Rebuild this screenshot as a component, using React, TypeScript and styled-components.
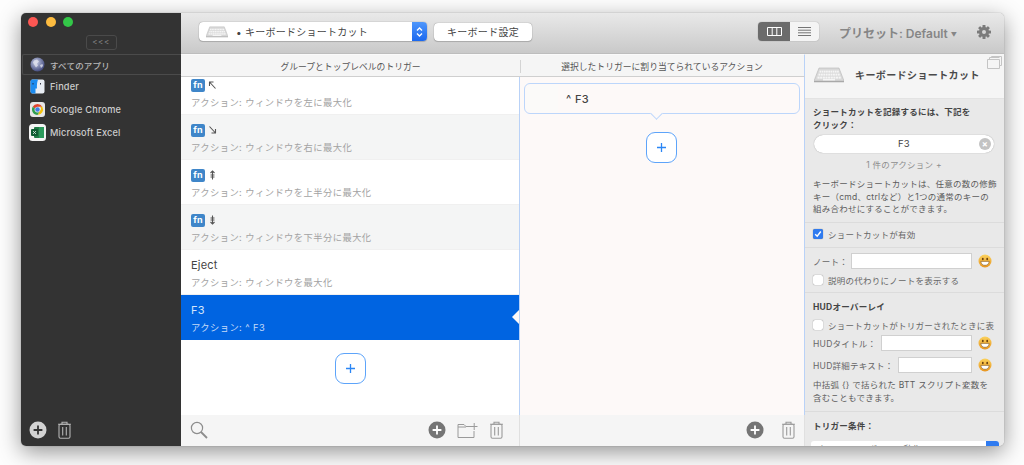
import React from 'react';
import styled, { createGlobalStyle } from 'styled-components';

const GlobalStyle = createGlobalStyle`
  html, body {
    margin: 0;
    height: 465px;
    overflow: hidden;
    background: #fdfdfd;
    font-family: 'Inter', 'Noto Sans CJK JP', sans-serif;
  }
  * { box-sizing: border-box; }
`;

const Page = styled.div`
  width: 1024px;
  height: 465px;
  padding: 13px 20px 19px 21px;
`;
const Window = styled.div`
  display: flex;
  width: 983px;
  height: 433px;
  border-radius: 5px;
  overflow: hidden;
  box-shadow: 0 6px 22px rgba(0, 0, 0, 0.42), 0 0 1px rgba(0, 0, 0, 0.5);
`;

/* sidebar */
const Sidebar = styled.aside`
  width: 160px;
  flex: none;
  display: flex;
  flex-direction: column;
  background: #333333;
`;
const Lights = styled.div`
  display: flex;
  gap: 7.5px;
  padding: 4px 0 0 7px;
  height: 22px;
`;
const Light = styled.span<{ $color: string }>`
  width: 10px;
  height: 10px;
  border-radius: 50%;
  background: ${(p) => p.$color};
`;
const CollapseRow = styled.div`
  display: flex;
  justify-content: center;
  height: 19px;
`;
const CollapseButton = styled.div`
  width: 31px;
  height: 15px;
  border: 1px solid #4a4a4a;
  border-radius: 3px;
  color: #8a8a8a;
  font-size: 8px;
  line-height: 13px;
  text-align: center;
  letter-spacing: 0.5px;
`;
const AppList = styled.div`
  flex: 1;
  display: flex;
  flex-direction: column;
`;
const AppRow = styled.div<{ $active?: boolean }>`
  height: ${(p) => (p.$active ? '21px' : '23px')};
  margin-left: 1px;
  display: flex;
  align-items: center;
  gap: 4px;
  padding-left: 6px;
  font-size: ${(p) => (p.$active ? '8.5px' : '9.2px')};
  font-weight: 500;
  letter-spacing: 0.2px;
  color: ${(p) => (p.$active ? '#b8b8b8' : '#cdcdcd')};
  border: 1px solid ${(p) => (p.$active ? '#4b4b4b' : 'transparent')};
  border-right: none;
  border-radius: 2px 0 0 2px;
`;
const AppIcon = styled.span`
  width: 17px;
  flex: none;
  display: flex;
  align-items: center;
  justify-content: center;
`;
const SidebarFoot = styled.div`
  height: 31px;
  display: flex;
  align-items: center;
  gap: 10px;
  padding: 0 0 2px 8px;
`;

/* main area */
const Main = styled.div`
  flex: 1;
  min-width: 0;
  display: flex;
  flex-direction: column;
`;
const Toolbar = styled.header`
  height: 41px;
  flex: none;
  display: flex;
  align-items: center;
  padding: 0 13px 3px 18px;
  background: linear-gradient(#e9e9e9, #c9c9c9);
  border-bottom: 1px solid #bdbdbd;
`;
const Select = styled.div`
  width: 228px;
  height: 19px;
  display: flex;
  align-items: center;
  background: #fff;
  border-radius: 4px;
  box-shadow: 0 0 1px rgba(0, 0, 0, 0.55), 0 1px 1px rgba(0, 0, 0, 0.15);
  font-size: 10px;
  color: #444;
  padding-left: 7px;
  overflow: hidden;
`;
const SelectLabel = styled.span`
  flex: 1;
  margin-left: 8px;
  letter-spacing: 0.25px;
`;
const Stepper = styled.span`
  width: 15px;
  height: 100%;
  display: flex;
  align-items: center;
  justify-content: center;
  background: linear-gradient(#4f97fb, #1b68ef);
`;
const ToolButton = styled.div`
  width: 98px;
  height: 18px;
  margin-left: 7px;
  background: #fff;
  border-radius: 4px;
  box-shadow: 0 0 1px rgba(0, 0, 0, 0.55), 0 1px 1px rgba(0, 0, 0, 0.15);
  font-size: 10px;
  line-height: 18px;
  text-align: center;
  color: #444;
  letter-spacing: 0.3px;
`;
const Segmented = styled.div`
  width: 61px;
  height: 19px;
  margin-left: auto;
  display: flex;
  border-radius: 4px;
  overflow: hidden;
  box-shadow: 0 0 1px rgba(0, 0, 0, 0.45);
`;
const Segment = styled.div<{ $on?: boolean }>`
  flex: ${(p) => (p.$on ? '0 0 32px' : '1')};
  display: flex;
  align-items: center;
  justify-content: center;
  background: ${(p) => (p.$on ? '#6b6b6b' : '#f4f4f4')};
`;
const Preset = styled.div`
  margin-left: 20px;
  width: 115px;
  padding-top: 1px;
  font-size: 12px;
  font-weight: 600;
  color: #868686;
  white-space: nowrap;
  small {
    font-size: 6px;
    margin-left: 3px;
    vertical-align: 1px;
  }
`;
const GearWrap = styled.div`
  margin-left: 23px;
  display: flex;
`;

const Content = styled.div`
  flex: 1;
  min-height: 0;
  display: flex;
`;
const TriggerColumn = styled.section`
  width: 339px;
  flex: none;
  display: flex;
  flex-direction: column;
`;
const ActionColumn = styled.section`
  width: 285px;
  flex: none;
  display: flex;
  flex-direction: column;
  background: #fdf9f8;
`;
const ColumnHead = styled.div<{ $blue?: boolean }>`
  height: 23px;
  flex: none;
  background: #f5f5f5;
  border-top: 1px solid #fafafa;
  border-bottom: 1px solid #cfcfcf;
  border-right: ${(p) => (p.$blue ? '1px solid #b9d2f7' : 'none')};
  display: flex;
  align-items: center;
  justify-content: center;
  font-size: 8.8px;
  color: #555;
  padding-top: 1px;
`;
const HeadLabel = styled.span<{ $line?: boolean }>`
  width: 100%;
  text-align: center;
  margin-left: ${(p) => (p.$line ? '-1px' : '0')};
  border-left: ${(p) => (p.$line ? '1px solid #d4d4d4' : 'none')};
`;
const TriggerList = styled.div`
  flex: 1;
  min-height: 0;
  overflow: hidden;
  background: #fff;
  border-right: 1px solid #b9d2f7;
`;
const TriggerScroll = styled.div`
  margin-top: -7px;
  display: flex;
  flex-direction: column;
  align-items: stretch;
`;
const Row = styled.div<{ $alt?: boolean; $selected?: boolean }>`
  position: relative;
  height: 45px;
  padding: 5px 10px 0;
  background: ${(p) => (p.$selected ? '#0064e1' : p.$alt ? '#f4f5f5' : '#fff')};
  border-bottom: 1px solid ${(p) => (p.$selected ? '#0064e1' : '#f0f0f0')};
`;
const RowTitle = styled.div<{ $selected?: boolean }>`
  height: 20px;
  display: flex;
  align-items: center;
  gap: 3px;
  font-size: 11px;
  letter-spacing: 0.2px;
  color: ${(p) => (p.$selected ? '#d5e5fb' : '#444')};
`;
const RowAction = styled.div<{ $selected?: boolean }>`
  font-size: 9.3px;
  letter-spacing: 0.42px;
  color: ${(p) => (p.$selected ? '#c4daf8' : '#a3a3a3')};
`;
const FnKey = styled.span`
  width: 14px;
  height: 13px;
  border-radius: 2px;
  background: #3f86c9;
  color: #fff;
  font-size: 9px;
  font-weight: 700;
  line-height: 12px;
  text-align: center;
`;
const Notch = styled.span`
  position: absolute;
  right: -1px;
  top: 14px;
  width: 0;
  height: 0;
  border-top: 8px solid transparent;
  border-bottom: 8px solid transparent;
  border-right: 8px solid #fdf9f8;
`;
const AddBox = styled.div`
  display: flex;
  justify-content: center;
  padding-top: 13px;
`;
const AddButton = styled.div`
  width: 31px;
  height: 31px;
  display: flex;
  align-items: center;
  justify-content: center;
  background: #fff;
  border: 1px solid #5da4fa;
  border-radius: 9px;
`;
const FootBar = styled.div`
  height: 31px;
  flex: none;
  background: #f5f5f5;
  border-right: 1px solid #e0e0e0;
  display: flex;
  align-items: center;
  padding: 0 0 1px 9px;
`;
const FootIcons = styled.div<{ $gap: number; $right: number }>`
  margin-left: auto;
  display: flex;
  align-items: center;
  gap: ${(p) => p.$gap}px;
  padding-right: ${(p) => p.$right}px;
`;
const ActionBody = styled.div`
  flex: 1;
  padding: 6px 4px 0 4px;
  border-right: 1px solid #b9d2f7;
`;
const ActionCard = styled.div`
  position: relative;
  height: 31px;
  display: flex;
  align-items: center;
  padding-left: 41px;
  border: 1px solid #bcd6fb;
  border-radius: 6px;
  font-size: 11px;
  font-weight: 500;
  color: #444;
  letter-spacing: 0.4px;
  &::after {
    content: '';
    position: absolute;
    left: 127px;
    bottom: -5px;
    width: 8px;
    height: 8px;
    background: #fdf9f8;
    border-right: 1px solid #bcd6fb;
    border-bottom: 1px solid #bcd6fb;
    transform: rotate(45deg);
  }
`;
const KeySwatch = styled.span`
  position: absolute;
  left: 1px;
  top: 1px;
  bottom: 1px;
  width: 32px;
  border-radius: 5px 0 0 5px;
  background: #fbfaf9;
`;
const ActionAdd = styled(AddBox)`
  padding: 18px 2px 0 0;
`;

/* right panel */
const Inspector = styled.aside`
  flex: 1;
  min-width: 0;
  display: flex;
  flex-direction: column;
  overflow: hidden;
  background: #e9e9e9;
  color: #555;
  font-size: 8.5px;
  letter-spacing: 0.25px;
`;
const InspectorHead = styled.div`
  position: relative;
  height: 45px;
  flex: none;
  display: flex;
  align-items: center;
  gap: 11px;
  padding: 0 0 3px 9px;
  background: #f5f5f5;
  border-bottom: 1px solid #e3e3e3;
  font-size: 10px;
  font-weight: 600;
  color: #4a4a4a;
  letter-spacing: 0.4px;
`;
const CornerIcon = styled.span`
  position: absolute;
  top: 2px;
  right: 2px;
  display: flex;
`;
const PanelSection = styled.div<{ $pad: string; $last?: boolean }>`
  flex: none;
  padding: ${(p) => p.$pad};
  border-bottom: ${(p) => (p.$last ? 'none' : '1px solid #dcdcdc')};
`;
const PanelTitle = styled.div`
  font-weight: 700;
  color: #444;
  line-height: 12.5px;
`;
const RecordField = styled.div`
  position: relative;
  height: 18px;
  margin: 4px 4px 0 1px;
  border-radius: 9px;
  background: #fff;
  box-shadow: 0 0 1px rgba(0, 0, 0, 0.4);
  text-align: center;
  font-size: 9.5px;
  line-height: 18px;
  color: #444;
`;
const ClearIcon = styled.span`
  position: absolute;
  right: 3px;
  top: 3px;
  width: 12px;
  height: 12px;
  border-radius: 50%;
  background: #c3c3c3;
  color: #fff;
  font-size: 9px;
  line-height: 12px;
  font-weight: 700;
`;
const CountLine = styled.div`
  margin-top: 6px;
  padding-right: 3px;
  text-align: center;
  color: #8e8e8e;
  line-height: 12px;
`;
const Paragraph = styled.p<{ $top: number }>`
  margin: ${(p) => p.$top}px 0 0;
  line-height: 12.5px;
  color: #5c5c5c;
`;
const CheckRow = styled.label<{ $top?: number }>`
  display: flex;
  align-items: center;
  gap: 5px;
  height: 14px;
  margin-top: ${(p) => p.$top ?? 0}px;
  white-space: nowrap;
  color: #666;
`;
const Box = styled.span<{ $on?: boolean }>`
  width: 10px;
  height: 10px;
  flex: none;
  border-radius: 2px;
  display: flex;
  align-items: center;
  justify-content: center;
  background: ${(p) => (p.$on ? '#2f7bf0' : '#fff')};
  box-shadow: 0 0 1px rgba(0, 0, 0, 0.6);
`;
const FormRow = styled.div<{ $top?: number }>`
  display: flex;
  align-items: center;
  height: 16px;
  margin-top: ${(p) => p.$top ?? 0}px;
  margin-right: 6px;
  white-space: nowrap;
`;
const FormLabel = styled.span`
  flex: 1;
  color: #666;
`;
const TextInput = styled.span<{ $w: number }>`
  width: ${(p) => p.$w}px;
  height: 16px;
  background: #fff;
  border: 1px solid #d0d0d0;
  margin-right: 6px;
`;
const PanelSelect = styled.div`
  display: flex;
  justify-content: space-between;
  height: 16px;
  margin: 8px 0 0 -2px;
  background: #fff;
  border-radius: 3px;
  overflow: hidden;
  padding-left: 6px;
  color: #666;
  line-height: 16px;
`;
const PanelSelectArrow = styled.span`
  width: 13px;
  background: #2f7bf0;
`;

const PlusCircle = ({ fill, cross }: { fill: string; cross: string }) => (
  <svg width="18" height="18" viewBox="0 0 18 18">
    <circle cx="9" cy="9" r="8.5" fill={fill} />
    <path d="M9 4.6v8.8M4.6 9h8.8" stroke={cross} strokeWidth="1.8" />
  </svg>
);

const Trash = ({ color }: { color: string }) => (
  <svg width="15" height="18" viewBox="0 0 15 18" fill="none" stroke={color} strokeWidth="1.1">
    <path d="M1 3.2h13M5 3V1.2h5V3" />
    <rect x="2" y="3.2" width="11" height="14" rx="1.5" />
    <path d="M5.7 6v8.5M9.3 6v8.5" />
  </svg>
);

const FolderPlus = () => (
  <svg width="21" height="17" viewBox="0 0 21 17" fill="none" stroke="#9a9a9a" strokeWidth="1">
    <path d="M17 9v6.5H1V2.5h6l2 2h6M1 5h8" />
    <path d="M14 4.5h6.5M17.2 1v7" />
  </svg>
);

const Search = () => (
  <svg width="18" height="18" viewBox="0 0 18 18" fill="none" stroke="#8d8d8d">
    <circle cx="7" cy="7" r="5.6" strokeWidth="1.2" />
    <path d="M11 11l6 6" strokeWidth="1.8" />
  </svg>
);

const PlusMark = () => (
  <svg width="11" height="11" viewBox="0 0 11 11">
    <path d="M5.5 1v9M1 5.5h9" stroke="#2b86f5" strokeWidth="1.3" />
  </svg>
);

const Keyboard = ({ w, h }: { w: number; h: number }) => (
  <svg width={w} height={h} viewBox="0 0 30 16">
    <path d="M5 1h20l5 13H0z" fill="#d9d9d9" stroke="#b5b5b5" strokeWidth="0.6" />
    <path d="M0 14h30v1.2H0z" fill="#a9a9a9" />
    {[3.6, 6.6, 9.6].map((y, r) =>
      Array.from({ length: 9 }).map((_, i) => (
        <rect key={`${r}-${i}`} x={5.5 - r * 1 + i * (2.2 + r * 0.22)} y={y} width={1.7 + r * 0.2} height="2" fill="#f5f5f5" />
      ))
    )}
    <rect x="9" y="12" width="12" height="1.4" fill="#f5f5f5" />
  </svg>
);

const Smiley = () => (
  <svg width="14" height="14" viewBox="0 0 14 14">
    <defs>
      <linearGradient id="smile" x1="0" y1="0" x2="0" y2="1">
        <stop offset="0" stopColor="#fbd25d" />
        <stop offset="1" stopColor="#e8951f" />
      </linearGradient>
    </defs>
    <circle cx="7" cy="7" r="6.5" fill="url(#smile)" />
    <ellipse cx="4.8" cy="5" rx="0.9" ry="1.3" fill="#6b4210" />
    <ellipse cx="9.2" cy="5" rx="0.9" ry="1.3" fill="#6b4210" />
    <path d="M2.8 7.4h8.4c-.3 2.6-2 3.9-4.2 3.9s-3.9-1.3-4.2-3.9z" fill="#fff" stroke="#6b4210" strokeWidth="0.5" />
  </svg>
);

const Globe = () => (
  <svg width="15" height="15" viewBox="0 0 15 15">
    <defs>
      <radialGradient id="globe" cx="0.4" cy="0.35" r="0.7">
        <stop offset="0" stopColor="#c6cde6" />
        <stop offset="1" stopColor="#3c4478" />
      </radialGradient>
    </defs>
    <circle cx="7.5" cy="7.5" r="7" fill="url(#globe)" />
    <path d="M4 3.5l3-1 2 2-2 2 1 2-2 2-2-3-1-2zM10 8l2.5-1 .5 2-2 2z" fill="#e4e6ef" opacity="0.75" />
  </svg>
);

const FinderIcon = () => (
  <svg width="15" height="15" viewBox="0 0 15 15">
    <rect x="0.5" y="0.5" width="14" height="14" rx="2" fill="#e9eef4" />
    <path d="M2.5.5H8c-1 3-1.3 6-1 9H5.5v5h-3a2 2 0 0 1-2-2v-10a2 2 0 0 1 2-2z" fill="#1b8cf0" />
    <path d="M3 4v1.5M10.5 4v1.5" stroke="#223" strokeWidth="0.9" />
  </svg>
);

const ChromeIcon = () => (
  <svg width="15" height="15" viewBox="0 0 15 15">
    <rect x="0" y="0" width="15" height="15" rx="3" fill="#e7e7e7" />
    <path d="M7.5 2a5.5 5.5 0 0 1 4.8 2.75H7.5A2.75 2.75 0 0 0 4.9 6.6L2.7 4.8A5.5 5.5 0 0 1 7.5 2z" fill="#e0452f" />
    <path d="M12.3 4.75A5.5 5.5 0 0 1 7.5 13l2.4-4.1a2.75 2.75 0 0 0 0-4.15z" fill="#f4c20d" />
    <path d="M2.7 4.8A5.5 5.5 0 0 0 7.5 13l2.4-4.1a2.75 2.75 0 0 1-5-2.3z" fill="#2f9e4f" />
    <circle cx="7.5" cy="7.5" r="2.2" fill="#3f7fe8" />
  </svg>
);

const ExcelIcon = () => (
  <svg width="17" height="17" viewBox="0 0 17 17">
    <rect x="0" y="0" width="17" height="17" rx="3.5" fill="#f4f4f4" />
    <rect x="5" y="3" width="10" height="11" rx="1" fill="#1f7a45" />
    <rect x="10" y="3" width="5" height="11" fill="#2b9a5b" />
    <rect x="2" y="5" width="7" height="7" rx="1" fill="#0f5c33" />
    <path d="M4 7l3 3M7 7l-3 3" stroke="#dfeee5" strokeWidth="0.8" />
  </svg>
);

const Gear = () => (
  <svg width="14" height="14" viewBox="0 0 14 14">
    <g fill="#7b7b7b">
      {[0, 45, 90, 135].map((a) => (
        <rect key={a} x="5.5" y="0" width="3" height="14" rx="0.6" transform={`rotate(${a} 7 7)`} />
      ))}
      <circle cx="7" cy="7" r="5" />
    </g>
    <circle cx="7" cy="7" r="2" fill="#d6d6d6" />
  </svg>
);

const ArrowGlyph = ({ d }: { d: string }) => (
  <svg width="9" height="10" viewBox="0 0 9 10" fill="none" stroke="#555" strokeWidth="1.1">
    <path d={d} />
  </svg>
);

const TRIGGERS = [
  { key: 'nw', arrow: 'M7.5 8.5L1.5 2M1.5 6V2h4', action: 'アクション: ウィンドウを左に最大化' },
  { key: 'se', arrow: 'M1.5 1.5L7.5 8M7.5 4v4h-4', action: 'アクション: ウィンドウを右に最大化', alt: true },
  { key: 'up', arrow: 'M4.5 9.5V1M2.5 3l2-2 2 2M2.5 5h4M2.5 7h4', action: 'アクション: ウィンドウを上半分に最大化' },
  { key: 'down', arrow: 'M4.5 .5V9M2.5 7l2 2 2-2M2.5 5h4M2.5 3h4', action: 'アクション: ウィンドウを下半分に最大化', alt: true },
];

const APPS = [
  { name: 'Finder', icon: <FinderIcon /> },
  { name: 'Google Chrome', icon: <ChromeIcon /> },
  { name: 'Microsoft Excel', icon: <ExcelIcon /> },
];

export default function App() {
  return (
    <>
      <GlobalStyle />
      <Page>
        <Window>
          <Sidebar>
            <Lights>
              <Light $color="#fc5753" />
              <Light $color="#fdbc40" />
              <Light $color="#33c748" />
            </Lights>
            <CollapseRow>
              <CollapseButton>&lt;&lt;&lt;</CollapseButton>
            </CollapseRow>
            <AppList>
              <AppRow $active>
                <AppIcon>
                  <Globe />
                </AppIcon>
                すべてのアプリ
              </AppRow>
              {APPS.map((a) => (
                <AppRow key={a.name}>
                  <AppIcon>{a.icon}</AppIcon>
                  {a.name}
                </AppRow>
              ))}
            </AppList>
            <SidebarFoot>
              <PlusCircle fill="#d2d2d2" cross="#333" />
              <Trash color="#b5b5b5" />
            </SidebarFoot>
          </Sidebar>

          <Main>
            <Toolbar>
              <Select>
                <Keyboard w={22} h={12} />
                <SelectLabel>• キーボードショートカット</SelectLabel>
                <Stepper>
                  <svg width="7" height="12" viewBox="0 0 7 12" fill="none" stroke="#fff" strokeWidth="1.3">
                    <path d="M1 4.5L3.5 2 6 4.5M1 7.5L3.5 10 6 7.5" />
                  </svg>
                </Stepper>
              </Select>
              <ToolButton>キーボード設定</ToolButton>
              <Segmented>
                <Segment $on>
                  <svg width="15" height="9" viewBox="0 0 15 9" fill="none" stroke="#fff">
                    <path d="M.5.5h14v8H.5zM5.2.5v8M9.8.5v8" />
                  </svg>
                </Segment>
                <Segment>
                  <svg width="13" height="9" viewBox="0 0 13 9" stroke="#666" strokeWidth="0.9">
                    <path d="M0 .5h13M0 3.2h13M0 5.8h13M0 8.5h13" />
                  </svg>
                </Segment>
              </Segmented>
              <Preset>
                プリセット: Default<small>▼</small>
              </Preset>
              <GearWrap>
                <Gear />
              </GearWrap>
            </Toolbar>

            <Content>
              <TriggerColumn>
                <ColumnHead>
                  <HeadLabel>グループとトップレベルのトリガー</HeadLabel>
                </ColumnHead>
                <TriggerList>
                  <TriggerScroll>
                    {TRIGGERS.map((t) => (
                      <Row key={t.key} $alt={t.alt}>
                        <RowTitle>
                          <FnKey>fn</FnKey>
                          <ArrowGlyph d={t.arrow} />
                        </RowTitle>
                        <RowAction>{t.action}</RowAction>
                      </Row>
                    ))}
                    <Row>
                      <RowTitle>Eject</RowTitle>
                      <RowAction>アクション: ウィンドウを最大化</RowAction>
                    </Row>
                    <Row $selected>
                      <RowTitle $selected>F3</RowTitle>
                      <RowAction $selected>アクション: ^ F3</RowAction>
                      <Notch />
                    </Row>
                    <AddBox>
                      <AddButton>
                        <PlusMark />
                      </AddButton>
                    </AddBox>
                  </TriggerScroll>
                </TriggerList>
                <FootBar>
                  <Search />
                  <FootIcons $gap={11} $right={15}>
                    <PlusCircle fill="#757575" cross="#fff" />
                    <FolderPlus />
                    <Trash color="#9a9a9a" />
                  </FootIcons>
                </FootBar>
              </TriggerColumn>

              <ActionColumn>
                <ColumnHead $blue>
                  <HeadLabel $line>選択したトリガーに割り当てられているアクション</HeadLabel>
                </ColumnHead>
                <ActionBody>
                  <ActionCard>
                    <KeySwatch />^ F3
                  </ActionCard>
                  <ActionAdd>
                    <AddButton>
                      <PlusMark />
                    </AddButton>
                  </ActionAdd>
                </ActionBody>
                <FootBar>
                  <FootIcons $gap={17} $right={8}>
                    <PlusCircle fill="#757575" cross="#fff" />
                    <Trash color="#9a9a9a" />
                  </FootIcons>
                </FootBar>
              </ActionColumn>

              <Inspector>
                <InspectorHead>
                  <Keyboard w={30} h={16} />
                  キーボードショートカット
                  <CornerIcon>
                    <svg width="15" height="13" viewBox="0 0 15 13" fill="none" stroke="#c4c4c4">
                      <path d="M.5 3.5h12v9H.5zM2.5 3.5v-2h10M4.5 1.5V.5h10v9h-2" />
                    </svg>
                  </CornerIcon>
                </InspectorHead>
                <PanelSection $pad="7px 6px 6px 8px">
                  <PanelTitle>
                    ショートカットを記録するには、下記を
                    <br />
                    クリック：
                  </PanelTitle>
                  <RecordField>
                    F3
                    <ClearIcon>×</ClearIcon>
                  </RecordField>
                  <CountLine>1 件のアクション +</CountLine>
                  <Paragraph $top={7}>
                    キーボードショートカットは、任意の数の修飾キー（cmd、ctrlなど）と1つの通常のキーの
                    <br />
                    組み合わせにすることができます。
                  </Paragraph>
                </PanelSection>
                <PanelSection $pad="4px 6px 6px 8px">
                  <CheckRow>
                    <Box $on>
                      <svg width="8" height="8" viewBox="0 0 8 8" fill="none" stroke="#fff" strokeWidth="1.4">
                        <path d="M1.2 4.2L3.2 6.2 6.8 1.5" />
                      </svg>
                    </Box>
                    ショートカットが有効
                  </CheckRow>
                </PanelSection>
                <PanelSection $pad="5px 6px 5px 8px">
                  <FormRow>
                    <FormLabel>ノート：</FormLabel>
                    <TextInput $w={121} />
                    <Smiley />
                  </FormRow>
                  <CheckRow $top={4}>
                    <Box />
                    説明の代わりにノートを表示する
                  </CheckRow>
                </PanelSection>
                <PanelSection $pad="8px 6px 7px 8px">
                  <PanelTitle>HUDオーバーレイ</PanelTitle>
                  <CheckRow $top={5}>
                    <Box />
                    ショートカットがトリガーされたときに表
                  </CheckRow>
                  <FormRow $top={3}>
                    <FormLabel>HUDタイトル：</FormLabel>
                    <TextInput $w={91} />
                    <Smiley />
                  </FormRow>
                  <FormRow $top={6}>
                    <FormLabel>HUD詳細テキスト：</FormLabel>
                    <TextInput $w={74} />
                    <Smiley />
                  </FormRow>
                  <Paragraph $top={6}>
                    中括弧 {'{}'} で括られた BTT スクリプト変数を
                    <br />
                    含むこともできます。
                  </Paragraph>
                </PanelSection>
                <PanelSection $pad="8px 5px 0 8px" $last>
                  <PanelTitle>トリガー条件：</PanelTitle>
                  <PanelSelect>
                    すべてのキーボードで動作
                    <PanelSelectArrow />
                  </PanelSelect>
                </PanelSection>
              </Inspector>
            </Content>
          </Main>
        </Window>
      </Page>
    </>
  );
}
